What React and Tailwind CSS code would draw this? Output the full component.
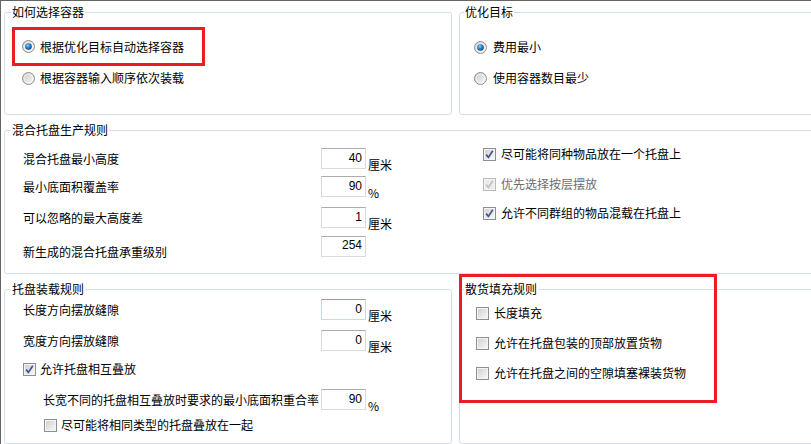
import React from 'react';

// Win7-style radio button
const Radio = ({ checked }) => (
  <svg width="13" height="13" viewBox="0 0 13 13" className="shrink-0">
    <defs>
      <linearGradient id="radioBg" x1="0" y1="0" x2="1" y2="1">
        <stop offset="0" stopColor="#c9c9c9" />
        <stop offset="1" stopColor="#fafafa" />
      </linearGradient>
      <radialGradient id="radioDot" cx="0.4" cy="0.35" r="0.65">
        <stop offset="0" stopColor="#9ad9ff" />
        <stop offset="0.45" stopColor="#2b8ad6" />
        <stop offset="1" stopColor="#0d4a88" />
      </radialGradient>
    </defs>
    <circle cx="6.5" cy="6.5" r="6" fill="url(#radioBg)" stroke="#8e8f8f" />
    <circle cx="6.5" cy="6.5" r="4.3" fill="none" stroke="#ffffff" strokeOpacity="0.6" />
    {checked && <circle cx="6.5" cy="6.5" r="3.3" fill="url(#radioDot)" />}
  </svg>
);

// Win7-style checkbox
const Check = ({ checked, disabled }) => (
  <svg width="13" height="13" viewBox="0 0 13 13" className="shrink-0">
    <defs>
      <linearGradient id="checkBg" x1="0" y1="0" x2="1" y2="1">
        <stop offset="0" stopColor="#d2d2d2" />
        <stop offset="1" stopColor="#f7f7f7" />
      </linearGradient>
    </defs>
    <rect x="0.5" y="0.5" width="12" height="12" fill="#f4f4f4" stroke={disabled ? '#b9b9b9' : '#8e8f8f'} />
    <rect x="2" y="2" width="9" height="9" fill={disabled ? '#ececec' : 'url(#checkBg)'} />
    {checked && (
      <path
        d="M3.2 6.6 L5.4 9.4 L9.8 2.8"
        fill="none"
        stroke={disabled ? '#c0c0c0' : '#43558f'}
        strokeWidth="1.7"
      />
    )}
  </svg>
);

const Field = ({ value, focused, top }) => (
  <div
    className={`w-[45px] h-[21px] shrink-0 border text-right pr-[3px] font-['Liberation_Sans',sans-serif] text-[12px] ${
      top ? 'leading-[16px]' : 'leading-[19px]'
    } ${focused ? 'border-[#c5daed] border-t-[#7da2ce]' : 'border-[#dadada] border-t-[#abadb3]'}`}
  >
    {value}
  </div>
);

const InputRow = ({ label, value, unit, className, labelClass, focused, top }) => (
  <div className={`flex h-[21px] ${className}`}>
    <div className={labelClass}>{label}</div>
    <Field value={value} focused={focused} top={top} />
    {unit && <div className="ml-[2px] mt-[9px]">{unit}</div>}
  </div>
);

const CheckRow = ({ label, checked, disabled, className }) => (
  <div className={`flex items-center h-[20px] ${className}`}>
    <Check checked={checked} disabled={disabled} />
    <span className={`ml-[5px] ${disabled ? 'text-[#6d6d6d]' : ''}`}>{label}</span>
  </div>
);

export default function App() {
  return (
    <div className="w-[811px] h-[444px] overflow-hidden bg-white border-t border-l border-[#646464] text-black text-[12px] leading-[16px] font-['Noto_Sans_CJK_SC','Noto_Sans',sans-serif]">
      <div className="w-[840px] pl-[3px] pt-[3px] flex flex-col gap-[7px]">
        {/* Row 1 */}
        <div className="flex gap-[7px]">
          <fieldset className="w-[448px] h-[111px] shrink-0 border border-[#d5dfe5] rounded-[3px]">
            <legend className="ml-[6px] px-[1px]">如何选择容器</legend>
            <div className="ml-[7px] mt-[7px] w-[193px] h-[39px] border-[3px] border-[#ec1c24] flex items-center pl-[7px]">
              <Radio checked />
              <span className="ml-[5px]">根据优化目标自动选择容器</span>
            </div>
            <div className="mt-[2px] h-[20px] flex items-center pl-[17px]">
              <Radio />
              <span className="ml-[5px]">根据容器输入顺序依次装载</span>
            </div>
          </fieldset>
          <fieldset className="flex-1 h-[111px] border border-[#d5dfe5] rounded-[3px]">
            <legend className="ml-[4px] px-[1px]">优化目标</legend>
            <div className="mt-[17px] h-[20px] flex items-center pl-[14px]">
              <Radio checked />
              <span className="ml-[6px]">费用最小</span>
            </div>
            <div className="mt-[11px] h-[20px] flex items-center pl-[14px]">
              <Radio />
              <span className="ml-[6px]">使用容器数目最少</span>
            </div>
          </fieldset>
        </div>

        {/* Row 2 */}
        <fieldset className="h-[152px] border border-[#d5dfe5] rounded-[3px]">
          <legend className="ml-[6px] px-[1px]">混合托盘生产规则</legend>
          <div className="flex">
            <div className="w-[478px] pl-[18px] shrink-0">
              <InputRow className="mt-[10px]" labelClass="w-[298px] self-center" label="混合托盘最小高度" value="40" unit="厘米" />
              <InputRow className="mt-[7px]" labelClass="w-[298px] self-center" label="最小底面积覆盖率" value="90" unit="%" />
              <InputRow className="mt-[10px]" labelClass="w-[298px] self-center" label="可以忽略的最大高度差" value="1" unit="厘米" />
              <InputRow className="mt-[8px]" labelClass="w-[298px] mt-[8px]" label="新生成的混合托盘承重级别" value="254" top />
            </div>
            <div>
              <CheckRow className="mt-[6px]" checked label="尽可能将同种物品放在一个托盘上" />
              <CheckRow className="mt-[10px]" checked disabled label="优先选择按层摆放" />
              <CheckRow className="mt-[9px]" checked label="允许不同群组的物品混载在托盘上" />
            </div>
          </div>
        </fieldset>

        {/* Row 3 */}
        <div className="flex gap-[7px]">
          <fieldset className="w-[448px] h-[163px] shrink-0 border border-[#d5dfe5] rounded-[3px]">
            <legend className="ml-[6px] px-[1px]">托盘装载规则</legend>
            <div className="pl-[18px]">
              <InputRow className="mt-[2px]" labelClass="w-[298px] self-center" label="长度方向摆放缝隙" value="0" unit="厘米" focused />
              <InputRow className="mt-[10px]" labelClass="w-[298px] self-center" label="宽度方向摆放缝隙" value="0" unit="厘米" />
              <div className="mt-[8px] h-[20px] flex items-center">
                <Check checked />
                <span className="ml-[4px]">允许托盘相互叠放</span>
              </div>
              <InputRow
                className="mt-[10px]"
                labelClass="w-[298px] pl-[20px] self-center whitespace-nowrap"
                label="长宽不同的托盘相互叠放时要求的最小底面积重合率"
                value="90"
                unit="%"
              />
              <div className="mt-[5px] h-[20px] flex items-center pl-[21px]">
                <Check />
                <span className="ml-[4px]">尽可能将相同类型的托盘叠放在一起</span>
              </div>
            </div>
          </fieldset>
          <div className="relative flex-1">
            <fieldset className="h-[163px] border border-[#d5dfe5] rounded-[3px]">
              <legend className="ml-[4px] px-[1px]">散货填充规则</legend>
              <div className="pl-[16px]">
                <CheckRow className="mt-[6px]" label="长度填充" />
                <CheckRow className="mt-[10px]" label="允许在托盘包装的顶部放置货物" />
                <CheckRow className="mt-[10px]" label="允许在托盘之间的空隙填塞裸装货物" />
              </div>
            </fieldset>
            {/* annotation */}
            <div className="absolute left-0 top-[-7px] w-[258px] h-[129px] border-[3px] border-[#ec1c24] pointer-events-none" />
          </div>
        </div>
      </div>
    </div>
  );
}
